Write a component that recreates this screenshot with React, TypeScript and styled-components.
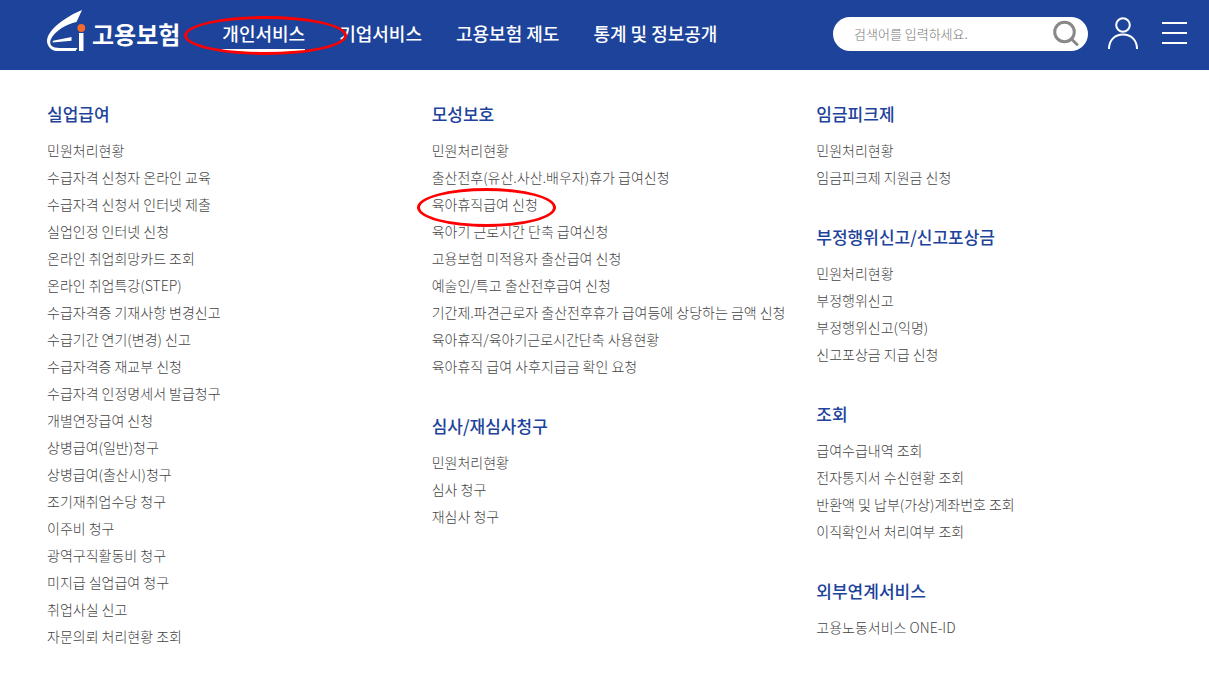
import React from 'react';
import styled, { createGlobalStyle } from 'styled-components';

const BLUE = '#1d439b';

const GlobalStyle = createGlobalStyle`
  *, *::before, *::after { box-sizing: border-box; }
  body {
    margin: 0;
    background: #fff;
    color: #444;
    font-family: 'Noto Sans CJK KR', 'Noto Sans', sans-serif;
    font-size: 14px;
    font-weight: 300;
  }
  a { color: inherit; text-decoration: none; }
  ul { list-style: none; margin: 0; padding: 0; }
`;

const Header = styled.header`
  display: flex;
  align-items: center;
  height: 70px;
  padding: 0 22px 2px 46px;
  background: ${BLUE};
  color: #fff;
`;

const Logo = styled.a`
  display: flex;
  align-items: center;
  gap: 6px;
  font-size: 24px;
  font-weight: 700;
  line-height: 44px;
  white-space: nowrap;
`;

const Menu = styled.ul`
  display: flex;
  gap: 34px;
  margin-left: 42px;
`;

const MenuItem = styled.li`
  position: relative;
`;

const MenuLink = styled.a<{ $active?: boolean }>`
  display: block;
  padding: 3px 0 2px;
  border-bottom: 3px solid ${(p) => (p.$active ? '#fff' : 'transparent')};
  font-size: 18px;
  font-weight: 500;
  line-height: 28px;
  white-space: nowrap;
`;

const Tools = styled.div`
  display: flex;
  align-items: center;
  margin-left: auto;
`;

const SearchForm = styled.form`
  display: flex;
  align-items: center;
  width: 255px;
  height: 34px;
  margin-right: 20px;
  padding: 0 9px 0 21px;
  border-radius: 17px;
  background: #fff;
`;

const SearchInput = styled.input`
  flex: 1;
  min-width: 0;
  height: 32px;
  padding: 0 0 2px;
  border: 0;
  outline: 0;
  background: none;
  color: #555;
  font-family: inherit;
  font-size: 13px;
  font-weight: 300;
  &::placeholder { color: #777; opacity: 1; }
`;

const IconButton = styled.button`
  display: flex;
  padding: 0;
  border: 0;
  background: none;
  color: inherit;
  cursor: pointer;
  & + & { margin-left: 24px; }
`;

const Sitemap = styled.main`
  display: grid;
  grid-template-columns: repeat(3, minmax(0, 1fr));
  padding: 30px 8px 24px 47px;
`;

const Column = styled.div`
  display: flex;
  flex-direction: column;
  gap: 32px;
`;

const GroupTitle = styled.h2`
  margin: 0 0 10px;
  color: ${BLUE};
  font-size: 17px;
  font-weight: 500;
  line-height: 27px;
`;

const Entry = styled.li`
  line-height: 27px;
  white-space: nowrap;
`;

const EntryLink = styled.a`
  position: relative;
  display: inline-block;
`;

const Ring = styled.span<{ $left: number; $top: number; $bottom: number; $right: number }>`
  position: absolute;
  z-index: 1;
  top: -${(p) => p.$top}px;
  bottom: -${(p) => p.$bottom}px;
  left: -${(p) => p.$left}px;
  right: -${(p) => p.$right}px;
  border: 3px solid #f00;
  border-radius: 50%;
  pointer-events: none;
`;

type GroupData = { title: string; items: string[] };

const menu = ['개인서비스', '기업서비스', '고용보험 제도', '통계 및 정보공개'];
const highlighted = '육아휴직급여 신청';

const columns: GroupData[][] = [
  [
    {
      title: '실업급여',
      items: [
        '민원처리현황',
        '수급자격 신청자 온라인 교육',
        '수급자격 신청서 인터넷 제출',
        '실업인정 인터넷 신청',
        '온라인 취업희망카드 조회',
        '온라인 취업특강(STEP)',
        '수급자격증 기재사항 변경신고',
        '수급기간 연기(변경) 신고',
        '수급자격증 재교부 신청',
        '수급자격 인정명세서 발급청구',
        '개별연장급여 신청',
        '상병급여(일반)청구',
        '상병급여(출산시)청구',
        '조기재취업수당 청구',
        '이주비 청구',
        '광역구직활동비 청구',
        '미지급 실업급여 청구',
        '취업사실 신고',
        '자문의뢰 처리현황 조회',
      ],
    },
  ],
  [
    {
      title: '모성보호',
      items: [
        '민원처리현황',
        '출산전후(유산.사산.배우자)휴가 급여신청',
        '육아휴직급여 신청',
        '육아기 근로시간 단축 급여신청',
        '고용보험 미적용자 출산급여 신청',
        '예술인/특고 출산전후급여 신청',
        '기간제.파견근로자 출산전후휴가 급여등에 상당하는 금액 신청',
        '육아휴직/육아기근로시간단축 사용현황',
        '육아휴직 급여 사후지급금 확인 요청',
      ],
    },
    { title: '심사/재심사청구', items: ['민원처리현황', '심사 청구', '재심사 청구'] },
  ],
  [
    { title: '임금피크제', items: ['민원처리현황', '임금피크제 지원금 신청'] },
    {
      title: '부정행위신고/신고포상금',
      items: ['민원처리현황', '부정행위신고', '부정행위신고(익명)', '신고포상금 지급 신청'],
    },
    {
      title: '조회',
      items: [
        '급여수급내역 조회',
        '전자통지서 수신현황 조회',
        '반환액 및 납부(가상)계좌번호 조회',
        '이직확인서 처리여부 조회',
      ],
    },
    { title: '외부연계서비스', items: ['고용노동서비스 ONE-ID'] },
  ],
];

const LogoMark = () => (
  <svg width="40" height="50" viewBox="0 0 40 50" aria-hidden="true">
    <path
      fill="#fff"
      d="M36 1 C24 6 13 13 6 21 C1 27 0 32 2 36 C4 40 7 42 12 42 H29.500 L31.500 39 H14 C6 39 2.500 36 5 30 C9 22 20 15 30.500 13 Z"
    />
    <path fill="#fff" d="M7 31.800 L25.500 28 V31.700 L6.500 33.400 Z" />
    <path fill="#fff" d="M33 24 H37.500 V42 H33 Z" />
    <circle cx="35.300" cy="19" r="3.900" fill="#f26a2e" />
  </svg>
);

export default function App() {
  return (
    <>
      <GlobalStyle />
      <Header>
        <Logo href="#">
          <LogoMark />
          고용보험
        </Logo>
        <nav>
          <Menu>
            {menu.map((label, i) => (
              <MenuItem key={label}>
                <MenuLink href="#" $active={i === 0}>{label}</MenuLink>
                {i === 0 && <Ring $left={38} $top={0} $bottom={3} $right={42} />}
              </MenuItem>
            ))}
          </Menu>
        </nav>
        <Tools>
          <SearchForm role="search">
            <SearchInput type="text" aria-label="검색어" placeholder="검색어를 입력하세요." />
            <IconButton type="submit" aria-label="검색">
              <svg width="27" height="28" viewBox="0 0 27 28" fill="none" stroke="#888" strokeWidth="3">
                <circle cx="12.500" cy="12" r="9.800" />
                <path d="M19.500 19 L25 24.500" strokeLinecap="round" />
              </svg>
            </IconButton>
          </SearchForm>
          <IconButton type="button" aria-label="로그인">
            <svg width="30" height="34" viewBox="0 0 30 34" fill="none" stroke="#fff" strokeWidth="2">
              <circle cx="15" cy="8" r="6.800" />
              <path d="M1 32 C1 23 7 17.500 15 17.500 C23 17.500 29 23 29 32" />
            </svg>
          </IconButton>
          <IconButton type="button" aria-label="전체메뉴">
            <svg width="25" height="24" viewBox="0 0 25 24" stroke="#fff" strokeWidth="2">
              <path d="M0 1 H25 M0 11 H25 M0 21 H25" />
            </svg>
          </IconButton>
        </Tools>
      </Header>
      <Sitemap>
        {columns.map((groups) => (
          <Column key={groups[0].title}>
            {groups.map((group) => (
              <section key={group.title}>
                <GroupTitle>{group.title}</GroupTitle>
                <ul>
                  {group.items.map((item) => (
                    <Entry key={item}>
                      <EntryLink href="#">
                        {item}
                        {item === highlighted && <Ring $left={15} $top={3} $bottom={9} $right={18} />}
                      </EntryLink>
                    </Entry>
                  ))}
                </ul>
              </section>
            ))}
          </Column>
        ))}
      </Sitemap>
    </>
  );
}
